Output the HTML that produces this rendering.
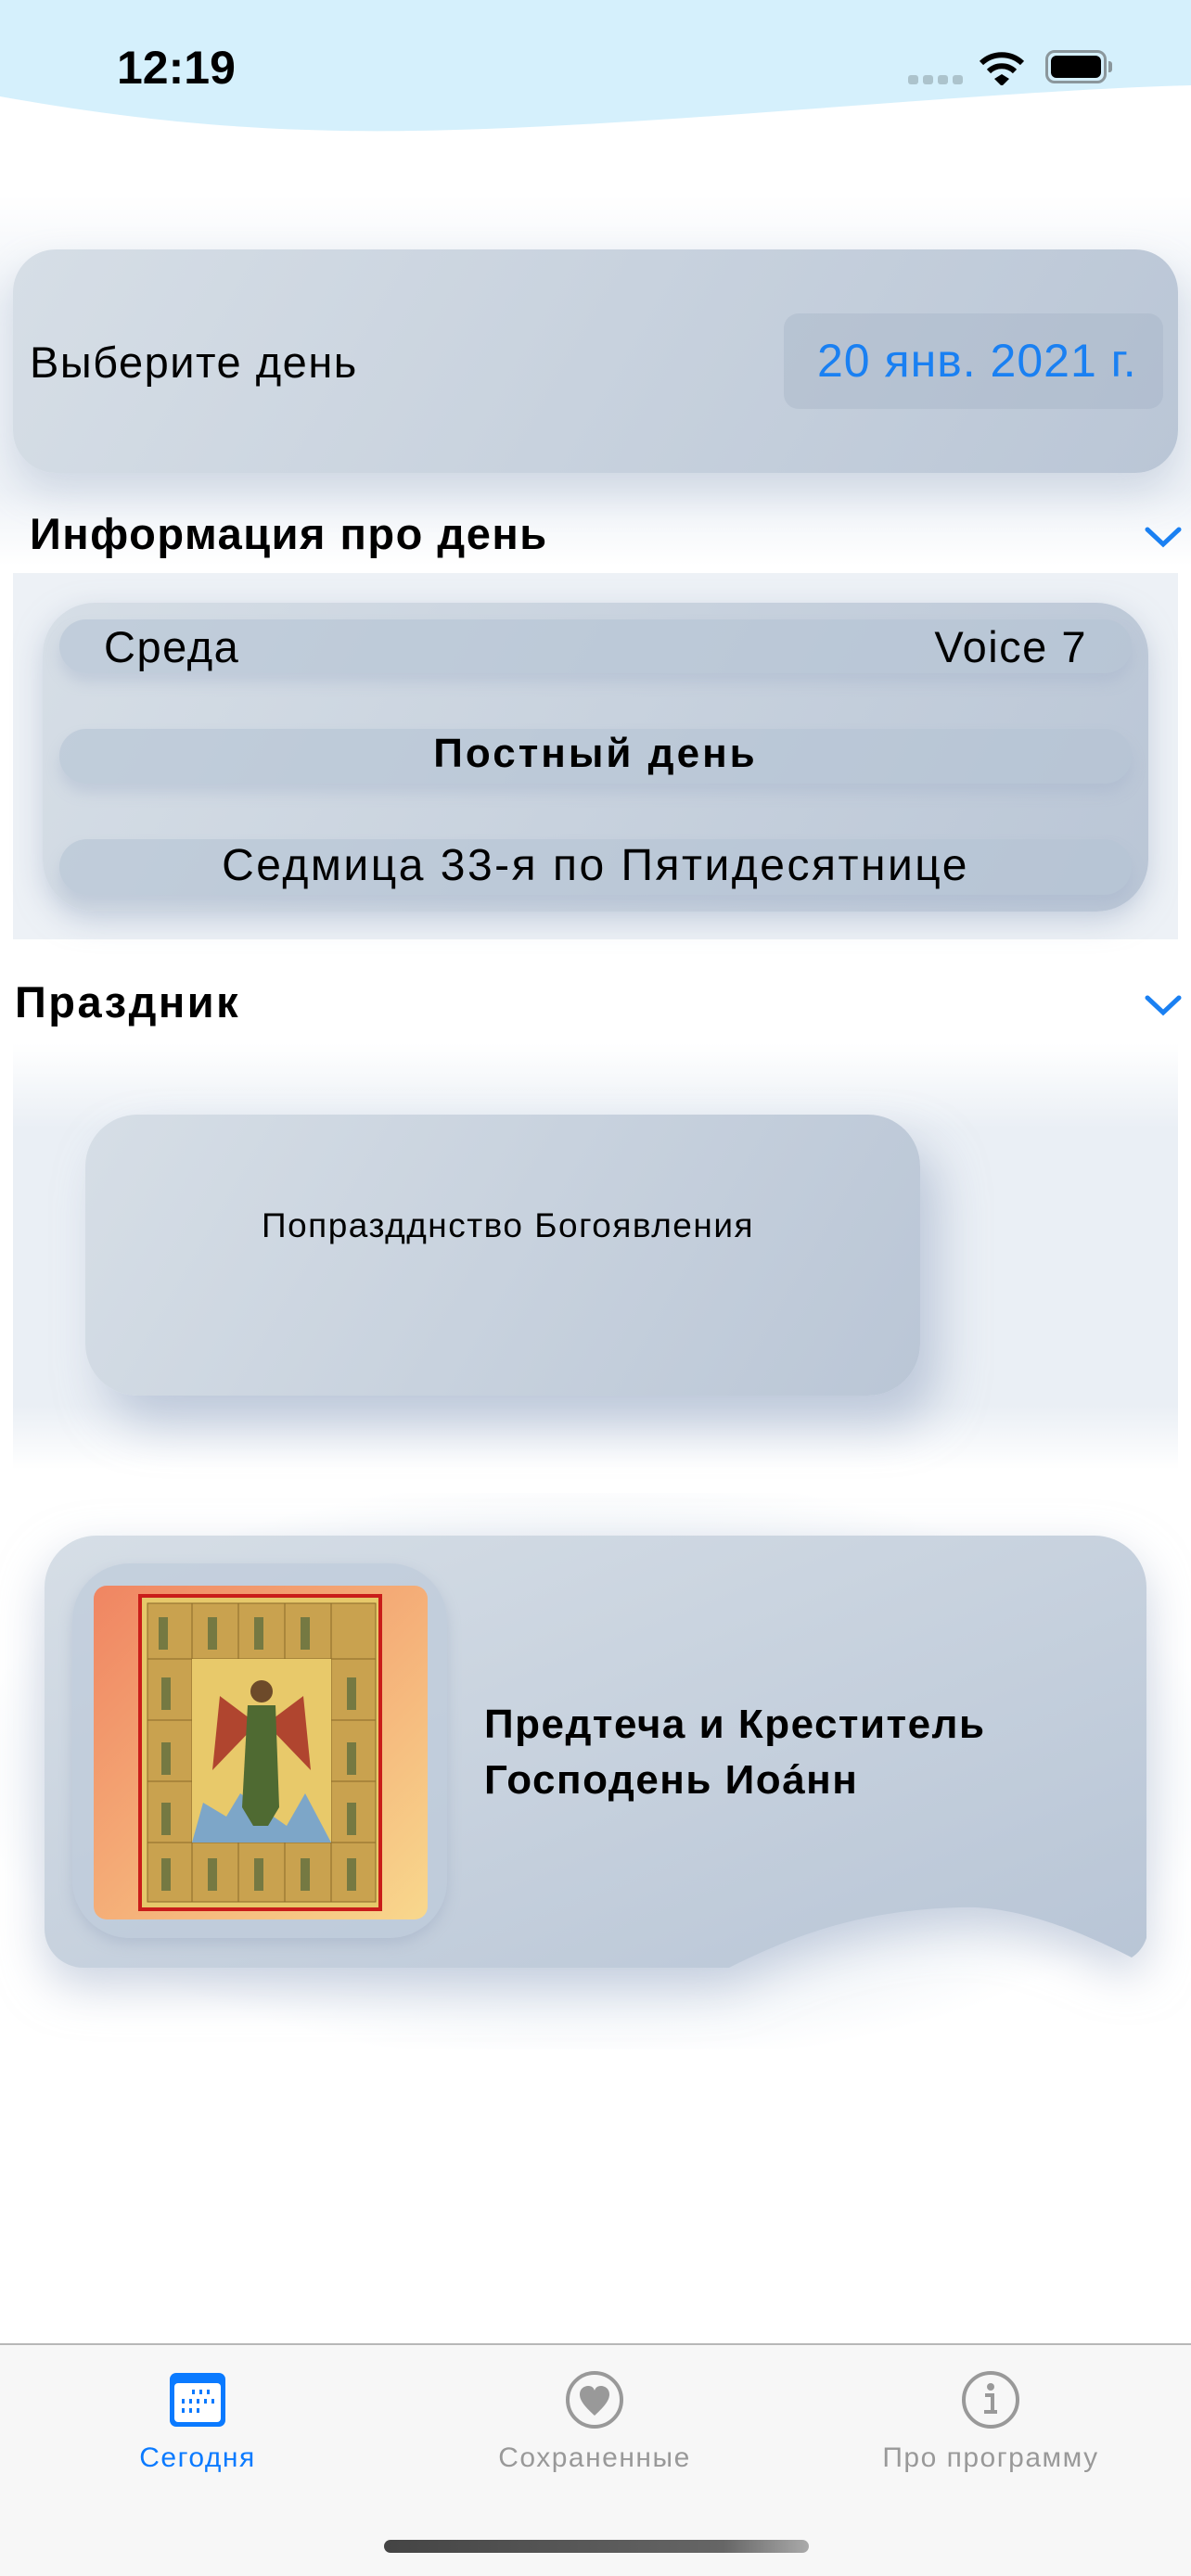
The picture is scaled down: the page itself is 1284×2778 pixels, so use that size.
<!DOCTYPE html>
<html><head><meta charset="utf-8"><style>
*{margin:0;padding:0;box-sizing:border-box}
body{width:1284px;height:2778px;background:#fff;position:relative;overflow:hidden;font-family:"Liberation Sans",sans-serif;color:#000}
.abs{position:absolute}
.card{background:linear-gradient(120deg,#d6dee6,#bac6d6);}
.t{position:absolute;white-space:nowrap}
</style></head><body>
<svg class="abs" style="left:0;top:0" width="1284" height="170"><path d="M0 0H1284V92C1000 100 600 150 330 140C200 136 90 120 0 104Z" fill="#d5f0fc"/></svg>
<div class="t" style="left:126px;top:44px;font-size:50px;font-weight:bold;letter-spacing:0px">12:19</div>
<div class="abs" style="left:979px;top:81px;width:11px;height:10px;border-radius:3px;background:#acc3cc;box-shadow:16px 0 #acc3cc,32px 0 #acc3cc,48px 0 #acc3cc"></div>
<svg class="abs" style="left:1055px;top:52px" width="50" height="40"><path d="M3 16A32 32 0 0 1 47 16" stroke="#000" stroke-width="6" fill="none"/><path d="M11 25A20 20 0 0 1 39 25" stroke="#000" stroke-width="6" fill="none"/><path d="M17 33L25 28L33 33L25 41Z" fill="#000"/></svg>
<div class="abs" style="left:1127px;top:54px;width:66px;height:36px;border:3px solid #8b979c;border-radius:10px;padding:3px"><div style="width:100%;height:100%;background:#000;border-radius:6px"></div></div>
<div class="abs" style="left:1195px;top:66px;width:4px;height:12px;background:#8b979c;border-radius:0 3px 3px 0"></div>

<div class="abs" style="left:0;top:210px;width:1284px;height:400px;background:linear-gradient(#fff,#eef2f7 30%,#eef2f7 80%,#fff)"></div>
<div class="abs card" style="left:14px;top:269px;width:1256px;height:241px;border-radius:46px;box-shadow:0 20px 40px rgba(170,185,205,.45)"></div>
<div class="t" style="left:32px;top:363px;font-size:47px;letter-spacing:1.5px">Выберите день</div>
<div class="abs" style="left:845px;top:338px;width:409px;height:103px;border-radius:16px;background:rgba(160,175,195,.35)"></div>
<div class="t" style="left:881px;top:360px;font-size:50px;letter-spacing:1px;color:#1a80f2">20 янв. 2021 г.</div>

<div class="t" style="left:32px;top:548px;font-size:47px;letter-spacing:1.5px;font-weight:bold">Информация про день</div>
<svg class="abs" style="left:1234px;top:567px" width="40" height="26"><path d="M3 4L20 20L37 4" stroke="#1a80f2" stroke-width="5" fill="none" stroke-linecap="round"/></svg>
<div class="abs" style="left:14px;top:618px;width:1256px;height:395px;background:#edf1f6"></div>
<div class="abs card" style="left:46px;top:650px;width:1192px;height:333px;border-radius:56px;box-shadow:0 10px 30px rgba(160,175,200,.5)"></div>
<div class="abs" style="left:64px;top:668px;width:1156px;height:58px;border-radius:29px;background:rgba(180,195,212,.6);box-shadow:0 10px 14px rgba(160,175,200,.35)"></div>
<div class="abs" style="left:64px;top:786px;width:1156px;height:59px;border-radius:29px;background:rgba(180,195,212,.6);box-shadow:0 10px 14px rgba(160,175,200,.35)"></div>
<div class="abs" style="left:64px;top:905px;width:1156px;height:60px;border-radius:30px;background:rgba(180,195,212,.6);box-shadow:0 10px 14px rgba(160,175,200,.35)"></div>
<div class="t" style="left:112px;top:670px;font-size:47px;letter-spacing:1.5px">Среда</div>
<div class="t" style="right:112px;top:670px;font-size:47px;letter-spacing:1.5px">Voice 7</div>
<div class="t" style="left:0;width:1284px;text-align:center;top:788px;font-size:44px;letter-spacing:3px;font-weight:bold">Постный день</div>
<div class="t" style="left:0;width:1284px;text-align:center;top:906px;font-size:48px;letter-spacing:2.5px">Седмица 33-я по Пятидесятнице</div>

<div class="t" style="left:16px;top:1053px;font-size:47px;letter-spacing:2.5px;font-weight:bold">Праздник</div>
<svg class="abs" style="left:1234px;top:1072px" width="40" height="26"><path d="M3 4L20 20L37 4" stroke="#1a80f2" stroke-width="5" fill="none" stroke-linecap="round"/></svg>
<div class="abs" style="left:14px;top:1125px;width:1256px;height:460px;background:linear-gradient(#fff,#eaeff5 20%,#eaeff5 85%,#fff)"></div>
<div class="abs card" style="left:92px;top:1202px;width:900px;height:303px;border-radius:56px;box-shadow:20px 30px 50px rgba(160,175,200,.6)"></div>
<div class="t" style="left:282px;top:1301px;font-size:37px;letter-spacing:1.5px">Попраздднство Богоявления</div>

<div class="abs" style="left:0;top:1610px;width:1284px;height:600px;background:radial-gradient(ellipse at center,#e6ecf3 40%,#fff 75%)"></div>
<svg class="abs" style="left:0;top:1600px;filter:drop-shadow(0 20px 25px rgba(160,175,200,.55))" width="1284" height="600"><defs><linearGradient id="g" x1="0" y1="0" x2="1" y2="1"><stop offset="0" stop-color="#d6dee6"/><stop offset="1" stop-color="#b8c5d6"/></linearGradient></defs>
<path d="M104 56H1180A56 56 0 0 1 1236 112V490A40 40 0 0 1 1220 511C1140 470 1080 455 1035 457C930 460 860 485 786 522H90A42 42 0 0 1 48 480V112A56 56 0 0 1 104 56Z" fill="url(#g)"/></svg>
<div class="abs" style="left:78px;top:1686px;width:404px;height:404px;border-radius:62px;background:rgba(190,202,218,.7);box-shadow:0 6px 14px rgba(150,165,190,.4)"></div>
<div class="abs" style="left:101px;top:1710px;width:360px;height:360px;border-radius:14px;background:linear-gradient(135deg,#f08562,#f5b27a 55%,#f8d88d)"></div>
<svg class="abs" style="left:149px;top:1719px" width="263" height="342"><rect width="263" height="342" fill="#c91d1a"/><rect x="4" y="4" width="255" height="334" fill="#e6c86a"/>
<g fill="#c9a24f" stroke="#8b6a2a" stroke-width="1"><rect x="10" y="10" width="48" height="60"/><rect x="58" y="10" width="50" height="60"/><rect x="108" y="10" width="50" height="60"/><rect x="158" y="10" width="50" height="60"/><rect x="208" y="10" width="48" height="60"/>
<rect x="10" y="70" width="48" height="66"/><rect x="10" y="136" width="48" height="66"/><rect x="10" y="202" width="48" height="66"/><rect x="208" y="70" width="48" height="66"/><rect x="208" y="136" width="48" height="66"/><rect x="208" y="202" width="48" height="66"/>
<rect x="10" y="268" width="48" height="64"/><rect x="58" y="268" width="50" height="64"/><rect x="108" y="268" width="50" height="64"/><rect x="158" y="268" width="50" height="64"/><rect x="208" y="268" width="48" height="64"/></g>
<rect x="58" y="70" width="150" height="198" fill="#e8c96a"/>
<path d="M80 190L88 110L128 140ZM186 190L178 110L138 140Z" fill="#b0452f"/>
<path d="M58 268L70 225L95 240L110 215L160 250L180 215L208 268Z" fill="#7da6c8"/>
<path d="M118 120H148L152 230L140 250H124L112 230Z" fill="#4f6a32"/>
<circle cx="133" cy="105" r="12" fill="#6d4a2a"/>
<g fill="#3f5e3a" opacity=".6"><rect x="22" y="25" width="10" height="35"/><rect x="75" y="25" width="10" height="35"/><rect x="125" y="25" width="10" height="35"/><rect x="175" y="25" width="10" height="35"/><rect x="25" y="90" width="10" height="35"/><rect x="225" y="90" width="10" height="35"/><rect x="25" y="160" width="10" height="35"/><rect x="225" y="160" width="10" height="35"/><rect x="25" y="225" width="10" height="35"/><rect x="225" y="225" width="10" height="35"/><rect x="25" y="285" width="10" height="35"/><rect x="75" y="285" width="10" height="35"/><rect x="125" y="285" width="10" height="35"/><rect x="175" y="285" width="10" height="35"/><rect x="225" y="285" width="10" height="35"/></g></svg>
<div class="t" style="left:522px;top:1830px;font-size:44px;letter-spacing:1.5px;font-weight:bold;line-height:60px">Предтеча и Креститель<br>Господень Иоа́нн</div>

<div class="abs" style="left:0;top:2527px;width:1284px;height:251px;background:#f7f7f7;border-top:2px solid #b8b8b8"></div>
<svg class="abs" style="left:181px;top:2557px" width="64" height="62"><rect x="2" y="2" width="60" height="58" rx="7" fill="#0a7aff"/><rect x="7" y="13" width="50" height="42" rx="4" fill="#fff"/><g fill="#0a7aff"><rect x="26" y="20" width="3" height="5"/><rect x="34" y="20" width="3" height="5"/><rect x="42" y="20" width="3" height="5"/><rect x="15" y="30" width="3" height="5"/><rect x="23" y="30" width="3" height="5"/><rect x="31" y="30" width="3" height="5"/><rect x="39" y="30" width="3" height="5"/><rect x="47" y="30" width="3" height="5"/><rect x="15" y="40" width="3" height="5"/><rect x="23" y="40" width="3" height="5"/><rect x="31" y="40" width="3" height="5"/></g></svg>
<svg class="abs" style="left:609px;top:2556px" width="64" height="64"><circle cx="32" cy="32" r="29" stroke="#999" stroke-width="4" fill="none"/><path d="M32 49C20 38 16 32 16 26C16 20 21 17 25 17C29 17 31 19 32 22C33 19 35 17 39 17C43 17 48 20 48 26C48 32 44 38 32 49Z" fill="#999"/></svg>
<svg class="abs" style="left:1036px;top:2556px" width="64" height="64"><circle cx="32" cy="32" r="29" stroke="#999" stroke-width="4" fill="none"/><circle cx="32" cy="18" r="4" fill="#999"/><path d="M26 27H34V44M25 45H39" stroke="#999" stroke-width="4" fill="none"/></svg>
<div class="t" style="left:0;width:426px;text-align:center;top:2634px;font-size:30px;letter-spacing:1.5px;color:#0a7aff">Сегодня</div>
<div class="t" style="left:428px;width:426px;text-align:center;top:2634px;font-size:30px;letter-spacing:1.5px;color:#999">Сохраненные</div>
<div class="t" style="left:855px;width:426px;text-align:center;top:2634px;font-size:30px;letter-spacing:1.5px;color:#999">Про программу</div>
<div class="abs" style="left:414px;top:2739px;width:458px;height:14px;border-radius:7px;background:linear-gradient(90deg,#444,#666 80%,#aaa)"></div>
</body></html>
